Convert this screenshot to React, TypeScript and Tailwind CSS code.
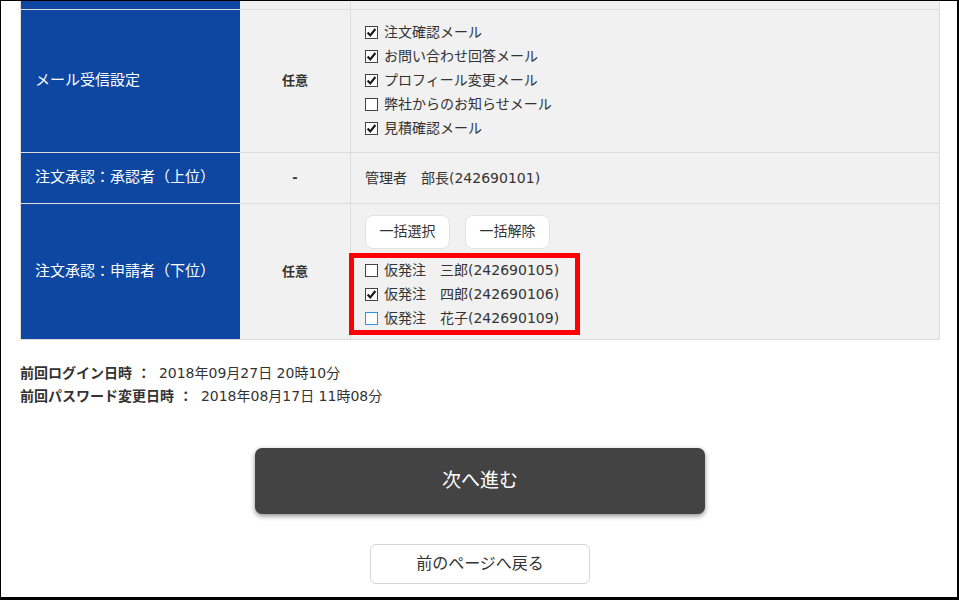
import type { ReactNode } from "react";

type Item = { label: string; checked: boolean; focus?: boolean };

const MAIL_ITEMS: Item[] = [
  { label: "注文確認メール", checked: true },
  { label: "お問い合わせ回答メール", checked: true },
  { label: "プロフィール変更メール", checked: true },
  { label: "弊社からのお知らせメール", checked: false },
  { label: "見積確認メール", checked: true },
];

const APPLICANTS: Item[] = [
  { label: "仮発注\u3000三郎(242690105)", checked: false },
  { label: "仮発注\u3000四郎(242690106)", checked: true },
  { label: "仮発注\u3000花子(242690109)", checked: false, focus: true },
];

function CheckBox({ checked, focus }: { checked: boolean; focus?: boolean }) {
  return (
    <span
      className={
        "flex h-[13px] w-[13px] shrink-0 items-center justify-center border bg-white " +
        (focus ? "border-[#2a95e8]" : "border-[#444]")
      }
    >
      {checked ? (
        <svg width="11" height="11" viewBox="0 0 11 11">
          <path d="M1.6 5.4 L4.3 8.4 L9.4 2" fill="none" stroke="#1a1a1a" strokeWidth="2.2" />
        </svg>
      ) : null}
    </span>
  );
}

function CheckRow({ item }: { item: Item }) {
  return (
    <label className="flex h-[24px] items-center gap-[6px] text-[14px] text-[#333]">
      <CheckBox checked={item.checked} focus={item.focus} />
      <span>{item.label}</span>
    </label>
  );
}

function Row({
  head,
  need,
  children,
  className = "",
}: {
  head: string;
  need: string;
  children: ReactNode;
  className?: string;
}) {
  return (
    <div className="flex border-b border-[#ddd]">
      <div className="flex w-[219px] shrink-0 items-center bg-[#0d47a1] pb-[1px] pl-[14px] text-[15px] text-white">
        {head}
      </div>
      <div className="flex w-[111px] shrink-0 items-center justify-center border-r border-[#ddd] bg-[#f1f1f1] text-[13px] font-bold text-[#333]">
        {need}
      </div>
      <div className={"flex-1 bg-[#f1f1f1] pl-[14px] " + className}>{children}</div>
    </div>
  );
}

export default function App() {
  return (
    <main
      className="h-[600px] w-[959px] overflow-hidden border-t border-l border-r-2 border-b-[3px] border-black bg-white"
      style={{ fontFamily: '"DejaVu Sans", "Noto Sans CJK JP", sans-serif' }}
    >
      <div className="pl-[19px]">
        <div className="w-[920px] border-x border-[#ddd]">
          <div className="flex h-[9px] border-b border-[#ddd]">
            <div className="w-[219px] bg-[#0d47a1]" />
            <div className="w-[111px] border-r border-[#ddd] bg-[#f1f1f1]" />
            <div className="flex-1 bg-[#f1f1f1]" />
          </div>

          <Row head="メール受信設定" need="任意" className="pt-[10px] pb-[12px]">
            {MAIL_ITEMS.map((item) => (
              <CheckRow key={item.label} item={item} />
            ))}
          </Row>

          <Row head="注文承認：承認者（上位）" need="-" className="flex h-[50px] items-center">
            <span className="text-[14px] text-[#333]">管理者　部長(242690101)</span>
          </Row>

          <Row head="注文承認：申請者（下位）" need="任意" className="pt-[11px] pb-[4px]">
            <div className="flex gap-[15px]">
              <button
                type="button"
                className="h-[34px] w-[85px] rounded-[8px] border border-[#e2e2e2] bg-white pb-[1px] text-[14px] text-[#333]"
              >
                一括選択
              </button>
              <button
                type="button"
                className="h-[34px] w-[85px] rounded-[8px] border border-[#e2e2e2] bg-white pb-[1px] text-[14px] text-[#333]"
              >
                一括解除
              </button>
            </div>
            <div className="mt-[4px] -ml-[16px] w-[231px] border-[5px] border-[#ff0000] pl-[11px]">
              {APPLICANTS.map((item) => (
                <CheckRow key={item.label} item={item} />
              ))}
            </div>
          </Row>
        </div>

        <div className="mt-[22px] text-[14px] leading-[23px] text-[#333]">
          <p>
            <span className="font-bold">前回ログイン日時 ：</span>
            <span className="ml-[8px]">2018年09月27日 20時10分</span>
          </p>
          <p>
            <span className="font-bold">前回パスワード変更日時 ：</span>
            <span className="ml-[8px]">2018年08月17日 11時08分</span>
          </p>
        </div>

        <div className="mt-[40px] flex w-[920px] flex-col items-center">
          <button
            type="button"
            className="h-[66px] w-[450px] rounded-[7px] bg-[#434343] pb-[1px] text-[19px] text-white shadow-[0_2px_5px_rgba(0,0,0,0.45)]"
          >
            次へ進む
          </button>
          <button
            type="button"
            className="mt-[30px] h-[40px] w-[220px] rounded-[6px] border border-[#d5d5d5] bg-white text-[16px] text-[#333]"
          >
            前のページへ戻る
          </button>
        </div>
      </div>
    </main>
  );
}
